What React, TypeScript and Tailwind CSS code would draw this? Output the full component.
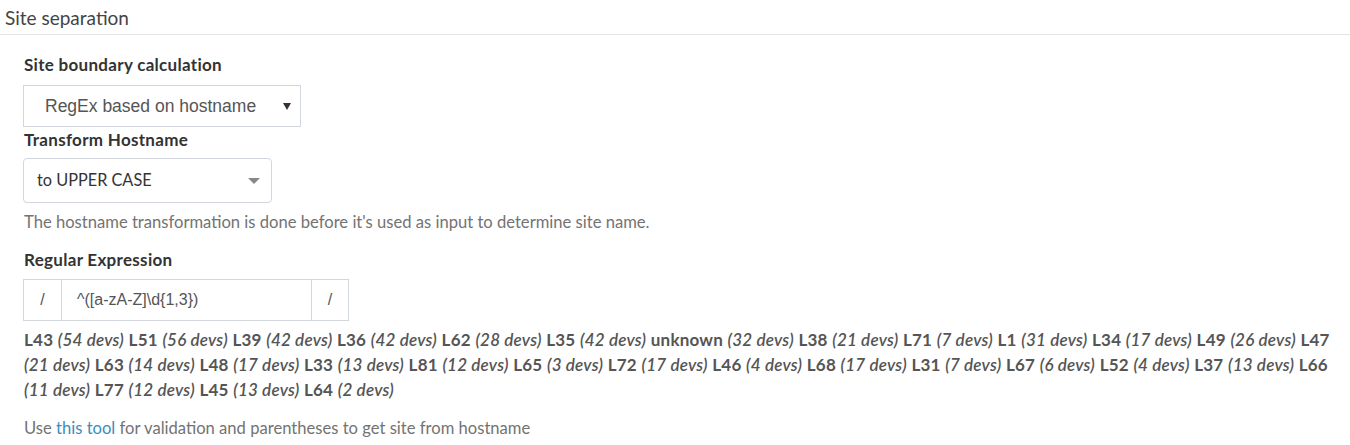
import React from "react";

const tags: [string, string][] = [
  ["L43", "54"], ["L51", "56"], ["L39", "42"], ["L36", "42"], ["L62", "28"], ["L35", "42"],
  ["unknown", "32"], ["L38", "21"], ["L71", "7"], ["L1", "31"], ["L34", "17"], ["L49", "26"],
  ["L47", "21"], ["L63", "14"], ["L48", "17"], ["L33", "13"], ["L81", "12"], ["L65", "3"],
  ["L72", "17"], ["L46", "4"], ["L68", "17"], ["L31", "7"], ["L67", "6"], ["L52", "4"],
  ["L37", "13"], ["L66", "11"], ["L77", "12"], ["L45", "13"], ["L64", "2"],
];

function Tag({ name, n, breakAfterName }: { name: string; n: string; breakAfterName?: boolean }) {
  return (
    <>
      <b className="font-bold">{name}</b>
      {breakAfterName ? <br /> : " "}
      <i className="italic font-semibold">({n} devs)</i>{" "}
    </>
  );
}

export default function App() {
  const sans = { fontFamily: "Lato, 'Noto Sans', sans-serif" };
  return (
    <div className="w-[1350px] h-[445px] bg-white text-[#333]" style={sans}>
      <div className="h-[35px] border-b border-[#e4e4e4] px-[5px] text-[19px] leading-[35px] text-[#444]">
        Site separation
      </div>
      <div className="pl-[23px] pr-[20px] pt-[19px]">
        <div className="text-[17px] tracking-[0.3px] font-bold leading-[22px] text-[#333] pl-[1px]">Site boundary calculation</div>
        <div className="mt-[9px] flex h-[42px] w-[278px] items-center justify-between border border-[#d2d6de] bg-white pl-[21px] pr-[8px] text-[17.5px] text-[#555]" style={{ fontFamily: "'Liberation Sans', Arial, sans-serif" }}>
          <span>RegEx based on hostname</span>
          <svg width="8" height="7" viewBox="0 0 8 7" className="mr-[1px]"><path d="M0 0 H8 L4 7 Z" fill="#333" /></svg>
        </div>
        <div className="mt-[2px] text-[17px] tracking-[0.3px] font-bold leading-[22px] text-[#333] pl-[1px]">Transform Hostname</div>
        <div className="mt-[7px] flex h-[45px] w-[249px] items-center justify-between rounded-[4px] border border-[#d2d6de] pl-[13px] pr-[11px] text-[16.3px] text-[#333]">
          <span>to UPPER CASE</span>
          <svg width="12" height="6" viewBox="0 0 12 6"><path d="M0 0 H12 L6 6 Z" fill="#888" /></svg>
        </div>
        <div className="mt-[8px] text-[16.6px] leading-[22px] text-[#737373] pl-[1px]">
          The hostname transformation is done before it's used as input to determine site name.
        </div>
        <div className="mt-[16px] text-[17px] tracking-[0.3px] font-bold leading-[22px] text-[#333] pl-[1px]">Regular Expression</div>
        <div className="mt-[8px] flex h-[42px] w-[326px] border border-[#d2d6de] text-[16px] text-[#555]" style={{ fontFamily: "'Liberation Sans', Arial, sans-serif" }}>
          <div className="flex w-[38px] items-center justify-center border-r border-[#d2d6de]">/</div>
          <div className="flex flex-1 items-center pl-[15px]">^([a-zA-Z]\d{"{"}1,3{"}"})</div>
          <div className="flex w-[37px] items-center justify-center border-l border-[#d2d6de]">/</div>
        </div>
        <div className="mt-[6px] text-[17px] tracking-[0.22px] leading-[25px] text-[#555] pl-[1px] whitespace-nowrap">
          {tags.map(([name, n], i) => (
            <React.Fragment key={name}>
              <Tag name={name} n={n} breakAfterName={i === 12 || i === 25} />
            </React.Fragment>
          ))}
        </div>
        <div className="mt-[15px] text-[16.6px] leading-[22px] text-[#737373] pl-[1px]">
          Use <a className="text-[#3c8dbc]">this tool</a> for validation and parentheses to get site from hostname
        </div>
      </div>
    </div>
  );
}
